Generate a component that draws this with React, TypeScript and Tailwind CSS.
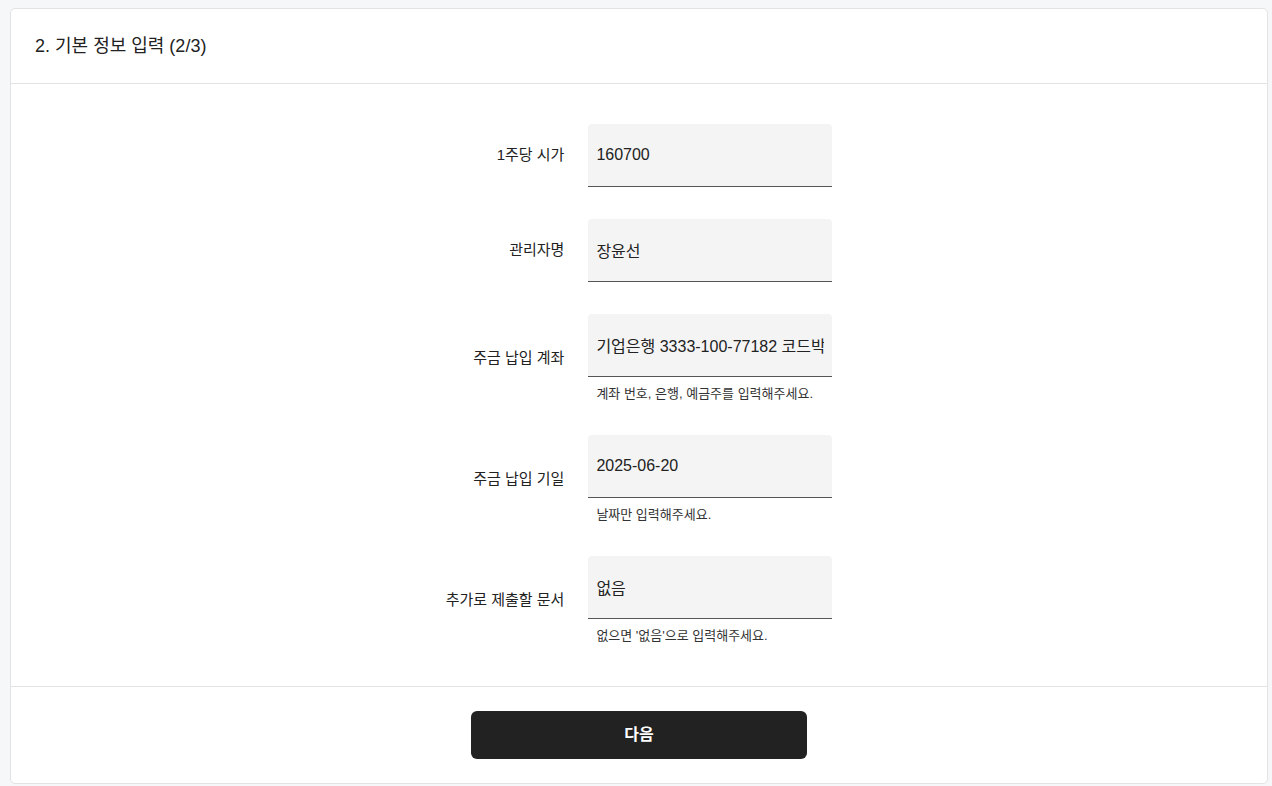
import React from 'react';

interface Field {
  label: string;
  value: string;
  help?: string;
}

const fields: Field[] = [
  { label: '1주당 시가', value: '160700' },
  { label: '관리자명', value: '장윤선' },
  { label: '주금 납입 계좌', value: '기업은행 3333-100-77182 코드박스', help: '계좌 번호, 은행, 예금주를 입력해주세요.' },
  { label: '주금 납입 기일', value: '2025-06-20', help: '날짜만 입력해주세요.' },
  { label: '추가로 제출할 문서', value: '없음', help: "없으면 '없음'으로 입력해주세요." },
];

const App: React.FC = () => {
  return (
    <div
      className="h-screen overflow-hidden bg-[#f6f7f8] pl-[10px] pr-[4px] pt-[8px] text-[#222]"
      style={{ fontFamily: '"Liberation Sans", "Noto Sans CJK KR", sans-serif' }}
    >
      <div className="flex flex-col rounded-[5px] border border-[#e3e3e3] bg-white">
        {/* header */}
        <div className="flex h-[75px] items-center border-b border-[#e3e3e3] px-6">
          <h2 className="text-[18px] text-[#222]">2. 기본 정보 입력 (2/3)</h2>
        </div>

        {/* form */}
        <div className="flex justify-center pt-10 pb-[41px]">
          <div className="grid grid-cols-[auto_244px] items-center gap-x-6 gap-y-8">
            {fields.map((f) => (
              <React.Fragment key={f.label}>
                <label className="justify-self-end text-[15px] text-[#222]">{f.label}</label>
                <div className="flex flex-col">
                  <input
                    readOnly
                    value={f.value}
                    className="h-[63px] w-full rounded-t-[4px] border-b border-[#555] bg-[#f4f4f4] px-2 text-[16px] text-[#222] outline-none"
                  />
                  {f.help && (
                    <p className="mt-2 px-2 text-[13px] leading-[18px] text-[#333]">{f.help}</p>
                  )}
                </div>
              </React.Fragment>
            ))}
          </div>
        </div>

        {/* footer */}
        <div className="flex justify-center border-t border-[#e3e3e3] py-6">
          <button className="h-12 w-[336px] rounded-[6px] bg-[#222] text-[16px] font-bold text-white">
            다음
          </button>
        </div>
      </div>
    </div>
  );
};

export default App;
